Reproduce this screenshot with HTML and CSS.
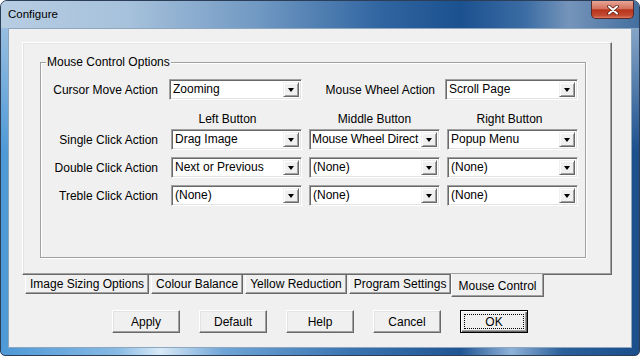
FILE: index.html
```html
<!DOCTYPE html>
<html lang="en">
<head>
    <meta charset="UTF-8">
    <title>Configure</title>
    <link rel="stylesheet" href="styles.css">
</head>
<body>
    <div class="window">
        <div class="titlebar">
            <span class="title">Configure</span>
            <div class="close">
                <svg width="12" height="10" viewBox="0 0 12 10">
                    <path d="M2 1.5 L10 8.5 M10 1.5 L2 8.5" stroke="#5a1f14" stroke-width="3.6" stroke-linecap="round"/>
                    <path d="M2 1.5 L10 8.5 M10 1.5 L2 8.5" stroke="#fff" stroke-width="2" stroke-linecap="round"/>
                </svg>
            </div>
        </div>

        <div class="client">
            <div class="tabctl">
                <div class="panel">
                    <div class="group">
                        <span class="legend">Mouse Control Options</span>

                        <div class="row row-top">
                            <span class="lbl">Cursor Move Action</span>
                            <div class="combo combo-wide first"><span class="val">Zooming</span><span class="arrow"></span></div>
                            <span class="lbl lbl-wheel">Mouse Wheel Action</span>
                            <div class="combo combo-wide last"><span class="val">Scroll Page</span><span class="arrow"></span></div>
                        </div>

                        <div class="row row-head">
                            <span class="lbl"></span>
                            <span class="head head-left">Left Button</span>
                            <span class="head">Middle Button</span>
                            <span class="head head-right">Right Button</span>
                        </div>

                        <div class="row row-first">
                            <span class="lbl">Single Click Action</span>
                            <div class="combo"><span class="val">Drag Image</span><span class="arrow"></span></div>
                            <div class="combo"><span class="val tight">Mouse Wheel Direct</span><span class="arrow"></span></div>
                            <div class="combo"><span class="val">Popup Menu</span><span class="arrow"></span></div>
                        </div>

                        <div class="row">
                            <span class="lbl">Double Click Action</span>
                            <div class="combo"><span class="val">Next or Previous</span><span class="arrow"></span></div>
                            <div class="combo"><span class="val">(None)</span><span class="arrow"></span></div>
                            <div class="combo"><span class="val">(None)</span><span class="arrow"></span></div>
                        </div>

                        <div class="row">
                            <span class="lbl">Treble Click Action</span>
                            <div class="combo"><span class="val">(None)</span><span class="arrow"></span></div>
                            <div class="combo"><span class="val">(None)</span><span class="arrow"></span></div>
                            <div class="combo"><span class="val">(None)</span><span class="arrow"></span></div>
                        </div>
                    </div>
                </div>

                <div class="tabs">
                    <div class="tab">Image Sizing Options</div>
                    <div class="tab">Colour Balance</div>
                    <div class="tab">Yellow Reduction</div>
                    <div class="tab">Program Settings</div>
                    <div class="tab active">Mouse Control</div>
                </div>
            </div>

            <div class="buttons">
                <div class="btn">Apply</div>
                <div class="btn">Default</div>
                <div class="btn">Help</div>
                <div class="btn">Cancel</div>
                <div class="btn ok">OK</div>
            </div>
        </div>
    </div>
</body>
</html>
```

FILE: styles.css
```css
body {
    margin: 0;
    background: #fff;
    font-family: "Liberation Sans", Arial, sans-serif;
    font-size: 12px;
    color: #000;
}

.window {
    width: 640px;
    height: 356px;
    box-sizing: border-box;
    border: 1px solid #2c3e57;
    border-radius: 7px 7px 5px 5px;
    display: flex;
    flex-direction: column;
    overflow: hidden;
    background:
        linear-gradient(180deg, rgba(190, 210, 230, 0.8) 0, rgba(190, 210, 230, 0) 150px),
        linear-gradient(90deg, #4d98d6 0%, #86b9e3 18%, #d8e9f6 25%, #6ea4d6 35%, #3a74b0 55%, #1f5592 72%, #8fb2d8 80%, #2a5f9a 88%, #1b4f8c 100%);
}

/* barre de titre */
.titlebar {
    height: 27px;
    flex: none;
    display: flex;
    align-items: flex-start;
    padding: 0 5px 0 7px;
    background: linear-gradient(90deg, #b7cde2 0%, #a6c1db 20%, #7199c3 40%, #2f64a0 60%, #1c5190 72%, #3b6ca3 82%, #7594ba 89%, #436f9f 100%);
}

.title {
    font-size: 11.5px;
    line-height: 27px;
}

.close {
    margin-left: auto;
    width: 43px;
    height: 18px;
    box-sizing: border-box;
    border: 1px solid #5b2a28;
    border-top: 0;
    border-radius: 0 0 5px 5px;
    background: linear-gradient(#e9a595, #d3715e 45%, #b8341c 52%, #c34a31 85%, #dd7c63);
    display: flex;
    align-items: center;
    justify-content: center;
}

.client {
    flex: 1;
    margin: 0 7px 7px;
    border: 1px solid #8fa6c0;
    background: #f0f0f0;
}

/* onglets */
.tabctl {
    margin: 13px 0 0 13px;
    width: 590px;
}

.panel {
    height: 233px;
    box-sizing: border-box;
    border: 1px solid;
    border-color: #fff #696969 #696969 #fff;
    box-shadow: inset -1px -1px 0 #a0a0a0, inset 1px 1px 0 #e3e3e3;
    padding: 19px 0 0 17px;
}

.group {
    position: relative;
    width: 546px;
    height: 196px;
    box-sizing: border-box;
    border: 1px solid #a0a0a0;
    box-shadow: 1px 1px 0 #fff, inset 1px 1px 0 #fff;
    padding-top: 16px;
}

.legend {
    position: absolute;
    top: -8px;
    left: 5px;
    padding: 0 1px;
    background: #f0f0f0;
    line-height: 14px;
}

.row {
    display: flex;
    align-items: center;
    height: 21px;
    margin-top: 7px;
}

.row-top {
    margin-top: 0;
}

.row-head {
    height: 14px;
    line-height: 14px;
    margin-top: 12px;
}

.row-first {
    margin-top: 3px;
}

.lbl {
    width: 117px;
    margin-right: 6px;
    flex: none;
    text-align: right;
    white-space: nowrap;
}

.lbl-wheel {
    flex: 1;
    width: auto;
    margin-right: 10px;
}

.head {
    width: 131px;
    margin-left: 7px;
    text-align: center;
    box-sizing: border-box;
}

.head-left {
    padding-right: 18px;
}

.head-right {
    padding-right: 6px;
}

.combo {
    display: flex;
    flex: none;
    width: 131px;
    height: 21px;
    margin-left: 7px;
    box-sizing: border-box;
    border: 1px solid;
    border-color: #a0a0a0 #fff #fff #a0a0a0;
    box-shadow: inset 1px 1px 0 #696969, inset -1px -1px 0 #e3e3e3;
    background: #fff;
    padding: 2px;
}

.combo-wide {
    width: 133px;
}

.combo.first {
    margin-left: 5px;
}

.combo.last {
    margin-left: 0;
    margin-right: 7px;
}

.val {
    flex: 1;
    overflow: hidden;
    white-space: nowrap;
    padding-left: 1px;
    line-height: 15px;
}

.val.tight {
    padding-left: 0;
    letter-spacing: -0.1px;
}

.arrow {
    width: 16px;
    flex: none;
    box-sizing: border-box;
    background: #f0f0f0;
    border: 1px solid;
    border-color: #f0f0f0 #696969 #696969 #f0f0f0;
    box-shadow: inset 1px 1px 0 #fff, inset -1px -1px 0 #a0a0a0;
    display: flex;
    align-items: center;
    justify-content: center;
}

.arrow::after {
    content: "";
    border-left: 3.5px solid transparent;
    border-right: 3.5px solid transparent;
    border-top: 4px solid #000;
}

.tabs {
    display: flex;
    align-items: flex-start;
    padding-left: 3px;
}

.tab {
    height: 19px;
    box-sizing: border-box;
    padding: 0 4px;
    margin-right: 2px;
    border: 1px solid;
    border-top: 0;
    border-color: #fff #696969 #696969 #fff;
    box-shadow: inset -1px -1px 0 #a0a0a0;
    line-height: 18px;
    white-space: nowrap;
}

.tab.active {
    height: 23px;
    margin-top: -1px;
    margin-left: -2px;
    padding: 2px 6px 0;
    line-height: 20px;
    background: #f0f0f0;
}

/* boutons */
.buttons {
    display: flex;
    justify-content: center;
    gap: 19px;
    margin-top: 13px;
}

.btn {
    width: 68px;
    height: 23px;
    box-sizing: border-box;
    border: 1px solid;
    border-color: #fff #696969 #696969 #fff;
    box-shadow: inset -1px -1px 0 #a0a0a0, inset 1px 1px 0 #e3e3e3;
    display: flex;
    align-items: center;
    justify-content: center;
}

.btn.ok {
    position: relative;
    border-color: #000;
    box-shadow: inset 1px 1px 0 #fff, inset -1px -1px 0 #696969, inset -2px -2px 0 #a0a0a0;
}

.btn.ok::after {
    content: "";
    position: absolute;
    top: 3px;
    left: 3px;
    right: 3px;
    bottom: 3px;
    border: 1px dotted #000;
}
```
